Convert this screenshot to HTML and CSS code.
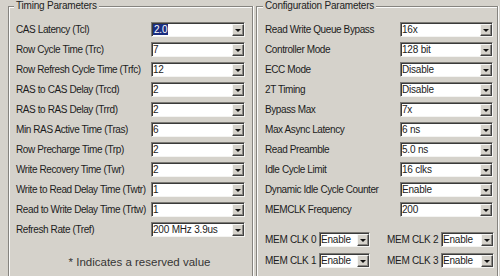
FILE: index.html
```html
<!DOCTYPE html>
<html>
<head>
<meta charset="utf-8">
<link rel="stylesheet" href="styles.css">
</head>
<body>
<div class="dialog">
  <section class="group group-timing">
    <div class="title">Timing Parameters</div>
    <div class="rows">
      <span class="label">CAS Latency (Tcl)</span>
      <div class="combo"><span class="value"><span class="sel">2.0</span></span><span class="btn"></span></div>
      <span class="label">Row Cycle Time (Trc)</span>
      <div class="combo"><span class="value">7</span><span class="btn"></span></div>
      <span class="label">Row Refresh Cycle Time (Trfc)</span>
      <div class="combo"><span class="value">12</span><span class="btn"></span></div>
      <span class="label">RAS to CAS Delay (Trcd)</span>
      <div class="combo"><span class="value">2</span><span class="btn"></span></div>
      <span class="label">RAS to RAS Delay (Trrd)</span>
      <div class="combo"><span class="value">2</span><span class="btn"></span></div>
      <span class="label">Min RAS Active Time (Tras)</span>
      <div class="combo"><span class="value">6</span><span class="btn"></span></div>
      <span class="label">Row Precharge Time (Trp)</span>
      <div class="combo"><span class="value">2</span><span class="btn"></span></div>
      <span class="label">Write Recovery Time (Twr)</span>
      <div class="combo"><span class="value">2</span><span class="btn"></span></div>
      <span class="label">Write to Read Delay Time (Twtr)</span>
      <div class="combo"><span class="value">1</span><span class="btn"></span></div>
      <span class="label">Read to Write Delay Time (Trtw)</span>
      <div class="combo"><span class="value">1</span><span class="btn"></span></div>
      <span class="label">Refresh Rate (Tref)</span>
      <div class="combo"><span class="value">200 MHz 3.9us</span><span class="btn"></span></div>
    </div>
    <p class="note">* Indicates a reserved value</p>
  </section>
  <section class="group group-config">
    <div class="title">Configuration Parameters</div>
    <div class="rows rows-config">
      <span class="label">Read Write Queue Bypass</span>
      <div class="combo"><span class="value">16x</span><span class="btn"></span></div>
      <span class="label">Controller Mode</span>
      <div class="combo"><span class="value">128 bit</span><span class="btn"></span></div>
      <span class="label">ECC Mode</span>
      <div class="combo"><span class="value">Disable</span><span class="btn"></span></div>
      <span class="label">2T Timing</span>
      <div class="combo"><span class="value">Disable</span><span class="btn"></span></div>
      <span class="label">Bypass Max</span>
      <div class="combo"><span class="value">7x</span><span class="btn"></span></div>
      <span class="label">Max Async Latency</span>
      <div class="combo"><span class="value">6 ns</span><span class="btn"></span></div>
      <span class="label">Read Preamble</span>
      <div class="combo"><span class="value">5.0 ns</span><span class="btn"></span></div>
      <span class="label">Idle Cycle Limit</span>
      <div class="combo"><span class="value">16 clks</span><span class="btn"></span></div>
      <span class="label">Dynamic Idle Cycle Counter</span>
      <div class="combo"><span class="value">Enable</span><span class="btn"></span></div>
      <span class="label">MEMCLK Frequency</span>
      <div class="combo"><span class="value">200</span><span class="btn"></span></div>
    </div>
    <div class="mem">
      <div class="pair"><span class="mlabel">MEM CLK 0</span><div class="combo combo-s"><span class="value">Enable</span><span class="btn"></span></div></div>
      <div class="pair"><span class="mlabel">MEM CLK 2</span><div class="combo combo-m"><span class="value">Enable</span><span class="btn"></span></div></div>
      <div class="pair"><span class="mlabel">MEM CLK 1</span><div class="combo combo-s"><span class="value">Enable</span><span class="btn"></span></div></div>
      <div class="pair"><span class="mlabel">MEM CLK 3</span><div class="combo combo-m"><span class="value">Enable</span><span class="btn"></span></div></div>
    </div>
  </section>
</div>
</body>
</html>
```

FILE: styles.css
```css
html, body {
  margin: 0;
  padding: 0;
}

body {
  width: 500px;
  height: 276px;
  overflow: hidden;
  background: #d5d2cb;
  font-family: "Liberation Sans", Arial, sans-serif;
  font-size: 10px;
  color: #1c1c1c;
}

.dialog {
  display: flex;
  align-items: flex-start;
  gap: 3px;
  padding-left: 8px;
}

.group {
  box-sizing: border-box;
  height: 270px;
  margin-top: 6px;
  border: 1px solid #86847f;
  border-bottom: 0;
  box-shadow: inset 1px 1px 0 #fbfbfa, 1px 0 0 #fbfbfa;
}

.group-timing {
  width: 245px;
  padding: 0 7px;
}

.group-config {
  width: 242px;
  padding: 0 4px 0 8px;
}

.title {
  width: fit-content;
  margin: -7px 0 0 -2px;
  padding: 0 2px;
  height: 12px;
  line-height: 12px;
  background: #d5d2cb;
  letter-spacing: -0.2px;
  color: #222;
}

.rows {
  display: grid;
  grid-template-columns: 1fr 94px;
  grid-auto-rows: 15px;
  row-gap: 5px;
  align-items: center;
  margin-top: 10px;
}

.rows-config {
  grid-template-columns: 1fr 93px;
}

.label {
  white-space: nowrap;
  letter-spacing: -0.4px;
  line-height: 12px;
}

.combo {
  box-sizing: border-box;
  height: 15px;
  display: flex;
  background: #fff;
  border: 1px solid;
  border-color: #7c7a75 #f4f4f2 #f4f4f2 #7c7a75;
  box-shadow: inset 1px 1px 0 #3a3a3a;
}

.value {
  flex: 1;
  min-width: 0;
  padding: 1px 0 0 1px;
  line-height: 12px;
  white-space: nowrap;
  overflow: hidden;
  letter-spacing: -0.2px;
}

.sel {
  display: inline-block;
  height: 11px;
  line-height: 11px;
  padding: 0 1px;
  background: #1a2d80;
  color: #fff;
}

.btn {
  box-sizing: border-box;
  width: 12px;
  height: 12px;
  margin-top: 1px;
  display: flex;
  align-items: center;
  justify-content: center;
  background: #d5d2cb;
  border: 1px solid;
  border-color: #f6f6f4 #404040 #404040 #f6f6f4;
  box-shadow: inset -1px -1px 0 #8a8884;
}

.btn::after {
  content: "";
  border-left: 3px solid transparent;
  border-right: 3px solid transparent;
  border-top: 3px solid #111;
  margin-top: 1px;
}

.note {
  margin: 18px 0 0;
  padding-left: 18px;
  text-align: center;
  font-size: 11.5px;
  line-height: 14px;
  color: #353535;
}

.mem {
  display: grid;
  grid-template-columns: auto auto;
  justify-content: start;
  column-gap: 17px;
  row-gap: 6px;
  margin-top: 15px;
}

.pair {
  display: flex;
  align-items: center;
}

.mlabel {
  width: 54px;
  white-space: nowrap;
  letter-spacing: -0.3px;
}

.combo-s {
  width: 51px;
}

.combo-m {
  width: 53px;
}
```
